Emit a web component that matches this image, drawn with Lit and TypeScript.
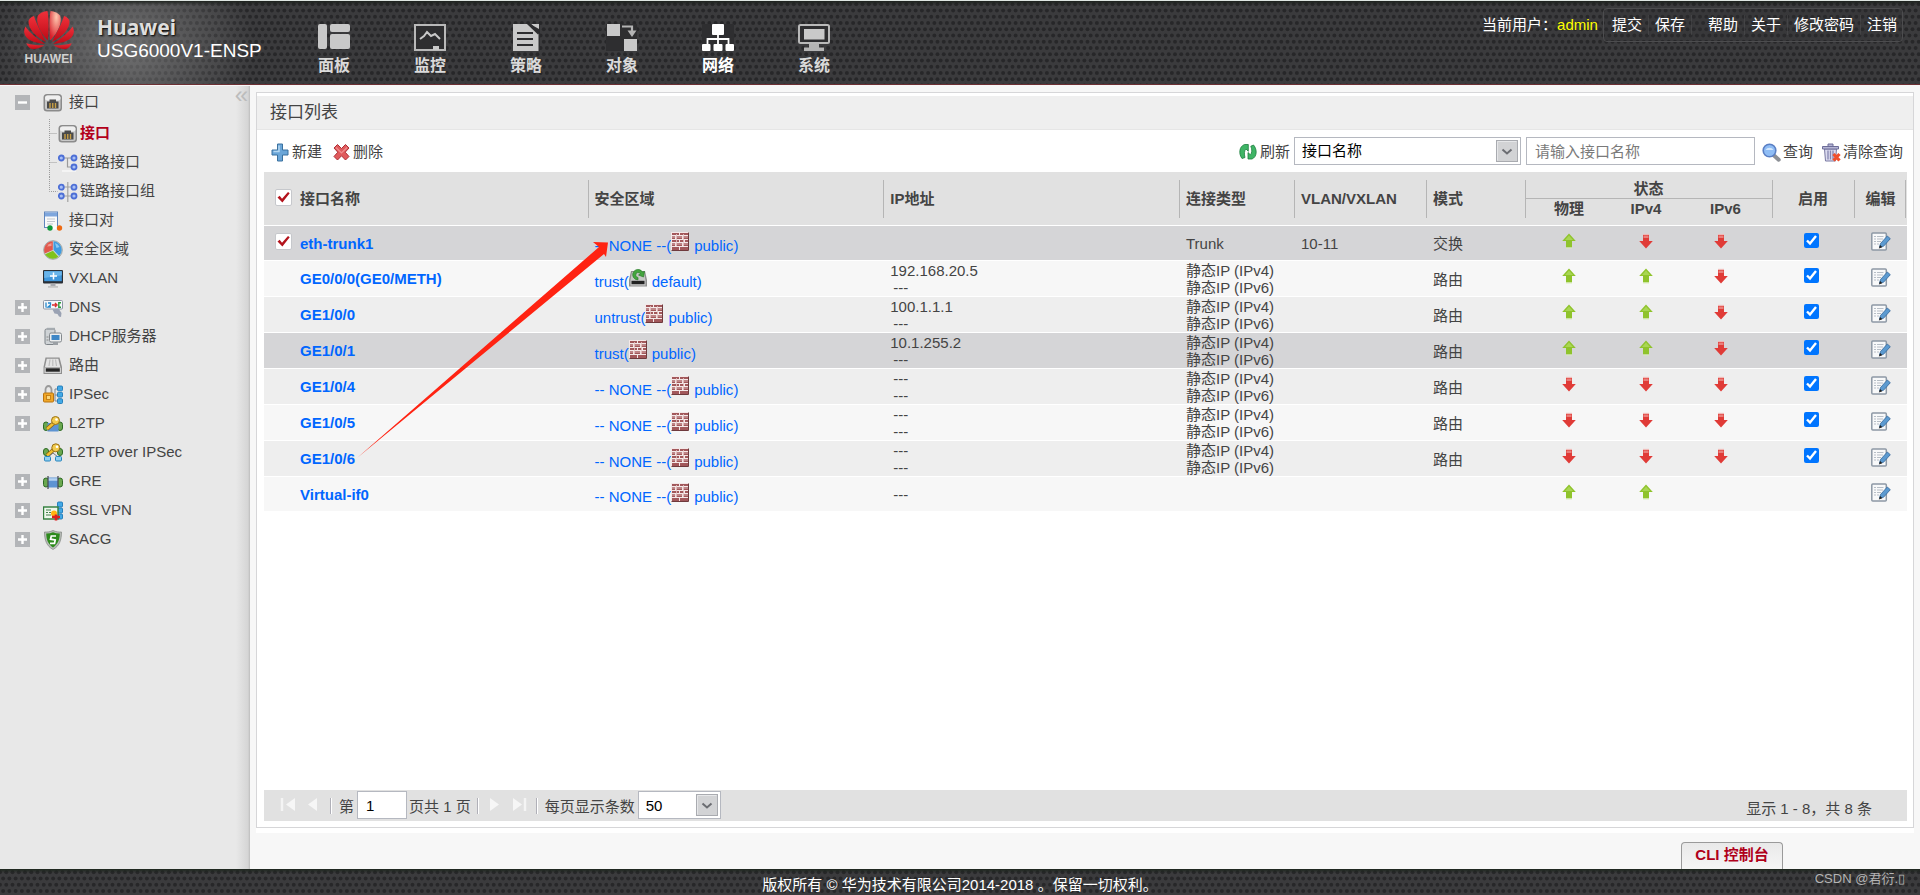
import { LitElement, html, css, svg, nothing, unsafeCSS } from "lit";
import { customElement, state } from "lit/decorators.js";
import { classMap } from "lit/directives/class-map.js";

const svgUrl = (markup: string) => unsafeCSS(`url("data:image/svg+xml,${encodeURIComponent(markup)}")`);

const meshDots: string[] = [];
for (let row = 0; row < 4; row++) {
  for (let col = 0; col < 5; col++) {
    const x = col * 5 + (row % 2 ? 2.5 : 0);
    meshDots.push(`<circle cx="${x}" cy="${row * 5 + 2.5}" r="1.6"/>`);
  }
}
const mesh = svgUrl(
  `<svg xmlns="http://www.w3.org/2000/svg" width="25" height="25" viewBox="0 0 20 20"><g fill="#272729">${meshDots.join("")}</g></svg>`
);
const comboArrow = svgUrl(
  `<svg xmlns="http://www.w3.org/2000/svg" width="22" height="22"><rect x=".5" y=".5" width="21" height="21" fill="#d2d3d5" stroke="#a9abb0"/><path d="M1.5 20.5V1.500H20.500" fill="none" stroke="#e6e7e9"/><path d="M6.500 9.500l4.500 4 4.500-4" fill="none" stroke="#6b6d72" stroke-width="2"/></svg>`
);
const redTick = svgUrl(
  `<svg xmlns="http://www.w3.org/2000/svg" width="17" height="17"><path d="M2.500 8.500l2.200-1.800 2.300 3L13 3l1.700 1.200L7.400 13.500z" fill="#b3131c"/></svg>`
);

const icons: Record<string, unknown> = {
  port: svg`<rect x=".5" y="1" width="18.500" height="17.500" rx="3.500" fill="#8b8b8b"/><rect x="2" y="2.500" width="15.500" height="14.500" rx="2.500" fill="#c9c9c9"/><rect x="2" y="2.500" width="15.500" height="5" rx="2.500" fill="#efefef"/><path d="M4 15.500V8.500h2.500V6.500h6.500v2h2.500v7z" fill="#4a4a4a"/><path d="M7 10v5M9.750 10v5M12.500 10v5" stroke="#c9a046" stroke-width="1.400"/>`,
  link: svg`<path d="M3 5h13M9.500 5v9h7" fill="none" stroke="#9a9a9a" stroke-width="1.200"/><path d="M4 18h14" stroke="#f8f8f8" stroke-width="1.500"/><g fill="#a9c0f5" stroke="#4d6fd6" stroke-width="1.800"><circle cx="3.300" cy="5" r="2.500"/><circle cx="16" cy="5" r="2.500"/><circle cx="16" cy="14" r="2.500"/></g>`,
  linkGroup: svg`<path d="M9.800 0v20M3 5h13M3 14h13" fill="none" stroke="#a2a2a2" stroke-width="1.200"/><g fill="#a9c0f5" stroke="#4d6fd6" stroke-width="1.800"><circle cx="3.300" cy="5.200" r="2.500"/><circle cx="16" cy="5.200" r="2.500"/><circle cx="3.300" cy="14" r="2.500"/><circle cx="16" cy="14" r="2.500"/></g>`,
  pair: svg`<rect x="1.500" y="1" width="13" height="15.500" fill="#fafafa" stroke="#5f86bd"/><rect x="2" y="1.500" width="12" height="4" fill="#7ea6dd"/><path d="M4 8h8M4 10.500h8M4 13h6" stroke="#c3c8cf"/><path d="M6 17h11" stroke="#fff" stroke-width="3"/><circle cx="7" cy="17" r="2.700" fill="#11993b"/><circle cx="16.500" cy="17" r="2.700" fill="#ee6a12"/>`,
  zone: svg`<circle cx="10" cy="10" r="9.300" fill="#d4d8d8" stroke="#8c9494" stroke-width=".8"/><path d="M9.800 10V1.200A8.800 8.800 0 0 0 1.800 13.400z" fill="#e2574c"/><path d="M10.500 9.900V1.200a8.800 8.800 0 0 1 5.600 14.900z" fill="#3f9be0"/><path d="M9.900 10.700l5.500 6A8.800 8.800 0 0 1 2.200 14.200z" fill="#7fc31c"/><path d="M4 6.500A7 7 0 0 1 8.500 3v3z" fill="#f19a90"/><path d="M12 3a7 7 0 0 1 4.500 4l-3 1z" fill="#8cc9f2"/>`,
  vxlan: svg`<rect x="0" y="1" width="20" height="13.500" rx="1" fill="#2b2f35"/><rect x="1.200" y="2.200" width="17.600" height="10" fill="#3f97dc"/><path d="M1.200 2.200h17.600v4L1.200 9z" fill="#69b4ea"/><path d="M10.500 3.500v7M7 7h7" stroke="#fff" stroke-width="1.500"/><path d="M7.500 14.500h5v2.500h-5z" fill="#a8abb0"/><path d="M5 17h10v1.800H5z" fill="#c4c4c4"/>`,
  dns: svg`<rect x=".5" y="2.500" width="19" height="8.500" rx="1" fill="#f5f7fa" stroke="#8c96a5"/><path d="M3 4.500v5M5 5h2.500v2L5 9h3" fill="none" stroke="#2588cc" stroke-width="1.300"/><path d="M9 7h4M12 5l2 2-2 2" fill="none" stroke="#d92b2b" stroke-width="1.400"/><path d="M18 4.800h-2.200v4.400H18" fill="none" stroke="#2a9a3a" stroke-width="1.400"/><path d="M9.500 11.500l6-1 3 4.500-.5 4-2-.5-1.500-2.500-3-.5z" fill="#9aa2b3"/>`,
  dhcp: svg`<rect x="2" y="2" width="10" height="15.500" rx="1.500" fill="#cfd3d6" stroke="#7d8388"/><path d="M4 .8h8v2H4z" fill="#a5abb0"/><rect x="6.500" y="6" width="12" height="9" rx="1.500" fill="#eceeef" stroke="#83888d"/><rect x="8.500" y="8" width="8" height="5" fill="#3f87c6"/><path d="M10 15h5v3h-5z" fill="#9ba0a5"/><path d="M3.500 10h2M3.500 13h2" stroke="#888"/>`,
  route: svg`<path d="M2.500 1.500h14L19 11v7H.5v-7z" fill="#8f8f8f"/><path d="M3.800 2.700h11.500l2 8.300H2z" fill="#e4e4e4"/><path d="M7 3.500L6 10M9.800 3.500V10M12.500 3.500l1 6.500" stroke="#bdbdbd" stroke-width="1.200"/><rect x="1.500" y="11.500" width="16.500" height="5.500" fill="#d0d0d0"/><rect x="2.800" y="12.300" width="14" height="3.400" fill="#262626"/>`,
  ipsec: svg`<path d="M2.500 8V4.500a3 3.500 0 0 1 6 0V8" fill="none" stroke="#9a9a9a" stroke-width="1.800"/><rect x=".5" y="8" width="10" height="9" rx="1" fill="#f0a627" stroke="#b87411"/><rect x="3.500" y="10.500" width="4" height="4" fill="#fbd67a" stroke="#b87411" stroke-width=".8"/><path d="M15 4h-3v12h3M12 10h3" fill="none" stroke="#7b8794"/><g fill="#43a9e6" stroke="#1c78b8" stroke-width=".9"><rect x="14.500" y="1" width="5" height="4.800" rx="1"/><rect x="14.500" y="7.300" width="5" height="4.800" rx="1"/><rect x="14.500" y="13.700" width="5" height="4.800" rx="1"/></g>`,
  l2tp: svg`<rect x=".5" y="8" width="5" height="8.500" rx="2.500" fill="#6aa84f" stroke="#2e6b25"/><rect x="14.500" y="8" width="5" height="8.500" rx="2.500" fill="#6aa84f" stroke="#2e6b25"/><rect x="4.500" y="9" width="11" height="8.500" fill="#5d93d2"/><path d="M4 15l8-7" stroke="#8a6210" stroke-width="4"/><path d="M4 15l8-7" stroke="#f0c02f" stroke-width="2.400"/><circle cx="12.500" cy="6.500" r="4" fill="#f2cb4d" stroke="#9b7114"/><circle cx="13.500" cy="5.500" r="1.300" fill="#fff"/>`,
  l2tpIpsec: svg`<rect x=".5" y="5.500" width="5" height="7" rx="2.500" fill="#6aa84f" stroke="#2e6b25"/><rect x="14.500" y="5.500" width="5" height="7" rx="2.500" fill="#6aa84f" stroke="#2e6b25"/><path d="M4 12.500l8-7" stroke="#8a6210" stroke-width="4"/><path d="M4 12.500l8-7" stroke="#f0c02f" stroke-width="2.400"/><circle cx="12.800" cy="4.800" r="4" fill="#f2cb4d" stroke="#9b7114"/><circle cx="14" cy="3.800" r="1.300" fill="#fff"/><path d="M5 14l5-4 5 4" fill="none" stroke="#777"/><g fill="#8fd0f2" stroke="#2584bd"><rect x="1.500" y="13.500" width="6" height="4.500" rx="1"/><rect x="12.500" y="13.500" width="6" height="4.500" rx="1"/></g>`,
  gre: svg`<rect x=".5" y="6" width="5" height="9" rx="2.500" fill="#6aa84f" stroke="#2e6b25"/><rect x="14.500" y="6" width="5" height="9" rx="2.500" fill="#6aa84f" stroke="#2e6b25"/><rect x="5" y="5.500" width="10" height="10" fill="#5d93d2"/><path d="M5 7.500h10" stroke="#b4d2f2" stroke-width="2.500"/><path d="M5 4v13M15 4v13" stroke="#4b4f57" stroke-width="1.300"/>`,
  sslvpn: svg`<g fill="#43a9e6" stroke="#1c78b8" stroke-width=".9"><rect x="14.500" y="1" width="5" height="5" rx="1"/><rect x="14.500" y="7" width="5" height="5" rx="1"/><rect x="14.500" y="13" width="5" height="5" rx="1"/></g><rect x=".5" y="6" width="14.500" height="12" fill="#eef7ec" stroke="#2f7d3b" stroke-width="1.400"/><path d="M3 9h5M3 11.500h2M6 11.500h2M3 14h5" stroke="#43804b" stroke-width="1.200"/><circle cx="11" cy="12.500" r="3" fill="#ffb30f"/><path d="M9 16h8M13 13.500v6" stroke="#dc1f1f" stroke-width="2.600"/>`,
  sacg: svg`<path d="M10 .5c3 1.300 5.500 1.800 8.500 1.500 0 8-2 14-8.500 17.500C3.500 16 1.500 10 1.500 2c3 .3 5.500-.2 8.500-1.500z" fill="#b9bdb9" stroke="#7c827c" stroke-width=".7"/><path d="M10 2.300c2.300 1 4.500 1.400 6.800 1.300-.2 6.400-2 10.900-6.800 13.900-4.800-3-6.600-7.500-6.800-13.900 2.300.1 4.500-.3 6.800-1.300z" fill="#2d8a1c"/><path d="M13 6H8.300L7.500 9.200l4.700.8-.7 3.300H7" fill="none" stroke="#fff" stroke-width="1.700"/>`,
  wall: svg`<rect width="18" height="19" fill="#f4e9e9"/><g fill="#a2585b"><path d="M1 1h7v2H1zM9 1h8v2H9zM1 4h3v3H1zM5 4h6v3H5zM12 4h5v3h-5zM1 8h7v2H1zM9 8h4v2H9zM14 8h3v2h-3zM1 11h3v3H1zM5 11h6v3H5zM12 11h5v3h-5zM1 15h7v3H1zM9 15h8v3H9z"/></g><path d="M1 5h16M1 12h16M5.500 2v12M12.500 2v12" stroke="#e8c9c9" stroke-width=".8"/><path d="M.5 18.500h17V.5" fill="none" stroke="#6f3a3d"/>`,
  system: svg`<path d="M2 3h14l2 9v6.500H0V12z" fill="#8e8e8e"/><path d="M3 4h12l1.500 8H1.500z" fill="#c4c8c4"/><rect x="1.500" y="12" width="15" height="5.500" fill="#c9c9c9"/><rect x="2.500" y="12.800" width="13" height="3.400" fill="#222"/><path d="M4.500 9.500A5 5 0 1 1 13.500 4l2-.5-1 5.500-5-2 2-1A2.500 2.500 0 1 0 9 9.500v2.300A5 5 0 0 1 4.500 9.500z" fill="#43a63e" stroke="#2a7d2a" stroke-width=".7"/>`,
  add: svg`<path d="M6.500 1h5v6H17v5h-5.500v6h-5v-6H1V7h5.500z" fill="#6ba6d8" stroke="#3a719f"/><path d="M8 2.500v6H2.500" fill="none" stroke="#b5d8f2" stroke-width="1.500"/>`,
  remove: svg`<path d="M1 5L4.500 1.500 8.500 5.500l4-4L16 5l-3.800 4.200L16 13.500 12.500 17l-4-4.200-4 4.200L1 13.500l3.800-4.300z" fill="#e05a5c" stroke="#ad2f35" stroke-linejoin="round"/><path d="M3 4.500L8.500 10 14 4.500" fill="none" stroke="#f08f8f" stroke-width="1.200"/>`,
  refresh: svg`<path d="M3 15.500C-.5 11 0 3.500 5.500 1.500h3.800v6.800L7 6C5.200 7.500 5 11 6 14.500z" fill="#3fb566" stroke="#1c7d3d" stroke-width=".8"/><path d="M14.500 2c4 4.500 3.500 12-1.500 14H9V9.500l2.300 2.200c1.800-1.500 2-5 .5-8.500z" fill="#3fb566" stroke="#1c7d3d" stroke-width=".8"/>`,
  search: svg`<path d="M11.500 12l5.200 4.700" stroke="#8d9096" stroke-width="4" stroke-linecap="round"/><circle cx="7.500" cy="7.500" r="6.300" fill="#8fbdf5" stroke="#5a7fc4" stroke-width="1.600"/><path d="M3.500 7a4.500 4 0 0 1 8 0z" fill="#d3e7fd"/>`,
  clear: svg`<path d="M2.500 6h12l-1 12h-10z" fill="#dcdcef" stroke="#7a7aa3"/><path d="M6 7.500v9M8.500 7.500v9M11 7.500v9" stroke="#8585b0" stroke-width="1.300"/><path d="M.5 3.500h16V6H.5zM6 3.500V1h5v2.500" fill="#b5b5d5" stroke="#6c6c98"/><path d="M11.500 11l6 6.500M17.500 11l-6 6.500" stroke="#f0502c" stroke-width="3.200"/>`,
  up: svg`<path d="M7 .5l6.800 7.500H10v6.500H4V8H.2z" fill="#8fc32c"/><path d="M7 2.500L3 7h8z" fill="#a9d653"/><path d="M4 14.500h6v1H4z" fill="#d9ecb8"/>`,
  down: svg`<path d="M4 1.500h6V8h3.800L7 15.500.2 8H4z" fill="#e03b37"/><path d="M4.500 2.500h5V5h-5z" fill="#ea7f7b"/><path d="M4 .8h6v1H4z" fill="#f3c6c4"/>`,
  edit: svg`<rect x=".8" y="1" width="14.500" height="17" rx="1" fill="#f8f9fa" stroke="#8d98a5" stroke-width="1.500"/><path d="M3 4.500h2M6 4.500h6.500M3 7h2M6 7h6M3 9.500h2M6 9.500h4M3 12h2M6 12h2" stroke="#b7bec6" stroke-width="1.200"/><path d="M8.500 15l1-3.500 6.800-7.500 3 2.700-6.800 7.600z" fill="#5c9ad0" stroke="#33679a" stroke-width=".8"/><path d="M7.800 16.500l1.300-3.500 2.300 2.300z" fill="#222"/>`,
  first: svg`<path d="M2 2v13" stroke="#f4f4f4" stroke-width="2.400"/><path d="M15 2v13L6 8.500z" fill="#f6f6f6"/>`,
  prev: svg`<path d="M12 2v13L3 8.500z" fill="#f6f6f6"/>`,
  next: svg`<path d="M4 2v13l9-6.500z" fill="#f6f6f6"/>`,
  last: svg`<path d="M2 2v13l9-6.500z" fill="#f6f6f6"/><path d="M14 2v13" stroke="#f4f4f4" stroke-width="2.400"/>`,
  navPanel: svg`<g fill="#c9c9c9"><rect x="0" y="0" width="9" height="25" rx="2"/><rect x="12" y="0" width="20" height="8" rx="2"/><rect x="12" y="10" width="20" height="15" rx="2"/></g>`,
  navMonitor: svg`<rect x="1" y="1" width="30" height="25" fill="#2e2e30" stroke="#b9b9b9" stroke-width="2"/><path d="M6 15l4-3 3-4 4 4 4-2 5 5" fill="none" stroke="#c9c9c9" stroke-width="2"/><path d="M19 22h6v4h-6z" fill="#c9c9c9"/>`,
  navPolicy: svg`<rect x="3" width="27" height="27" fill="#2e2e30"/><path d="M3 0h17l8.500 8.500V27H3z" fill="#c9c9c9"/><path d="M20 0h9v5z" fill="#c9c9c9"/><path d="M18 -1l11 10.500" stroke="#2e2e30" stroke-width="3"/><path d="M7 9h16M7 15h16M7 21h16" stroke="#2e2e30" stroke-width="2"/>`,
  navObject: svg`<rect width="31" height="27" fill="#2e2e30"/><path d="M1 0h13v12H1zM18 15h13v12H18z" fill="#c9c9c9"/><path d="M16 2.500h10V8" fill="none" stroke="#b4b4b4" stroke-width="2.200"/><path d="M21.500 6.500h9L26 13z" fill="#b4b4b4"/>`,
  navNetwork: svg`<rect width="32" height="27" fill="#2e2e30"/><g fill="#fff"><rect x="10" y="0" width="12" height="11" rx="1"/><rect x="0" y="20" width="8.500" height="7" rx="1"/><rect x="11.500" y="20" width="9" height="7" rx="1"/><rect x="23.500" y="20" width="8.500" height="7" rx="1"/></g><path d="M16 10v11M5.500 21v-6h21v6" fill="none" stroke="#fff" stroke-width="1.800"/>`,
  navSystem: svg`<rect x="1" y="1" width="30" height="18" rx="1.500" fill="#2e2e30" stroke="#b9b9b9" stroke-width="2"/><rect x="6" y="5" width="20.500" height="10.500" fill="#c9c9c9"/><path d="M11 20h10v3.500h5V27H6v-3.500h5z" fill="#b4b4b4"/>`,
};

const icon = (name: string, w = 20, h = 20) =>
  html`<svg class="icon" width=${w} height=${h} viewBox="0 0 ${w} ${h}" aria-hidden="true">${icons[name]}</svg>`;

interface MenuItem {
  label: string;
  icon: string;
  toggle?: "open" | "closed";
  children?: { label: string; icon: string; current?: boolean }[];
}

const menu: MenuItem[] = [
  {
    label: "接口",
    icon: "port",
    toggle: "open",
    children: [
      { label: "接口", icon: "port", current: true },
      { label: "链路接口", icon: "link" },
      { label: "链路接口组", icon: "linkGroup" },
    ],
  },
  { label: "接口对", icon: "pair" },
  { label: "安全区域", icon: "zone" },
  { label: "VXLAN", icon: "vxlan" },
  { label: "DNS", icon: "dns", toggle: "closed" },
  { label: "DHCP服务器", icon: "dhcp", toggle: "closed" },
  { label: "路由", icon: "route", toggle: "closed" },
  { label: "IPSec", icon: "ipsec", toggle: "closed" },
  { label: "L2TP", icon: "l2tp", toggle: "closed" },
  { label: "L2TP over IPSec", icon: "l2tpIpsec" },
  { label: "GRE", icon: "gre", toggle: "closed" },
  { label: "SSL VPN", icon: "sslvpn", toggle: "closed" },
  { label: "SACG", icon: "sacg", toggle: "closed" },
];

const sections = [
  { label: "面板", icon: "navPanel" },
  { label: "监控", icon: "navMonitor" },
  { label: "策略", icon: "navPolicy" },
  { label: "对象", icon: "navObject" },
  { label: "网络", icon: "navNetwork", current: true },
  { label: "系统", icon: "navSystem" },
];

type Link = "up" | "down" | null;
interface Row {
  name: string;
  zone: string;
  vsys: string;
  ip: string[];
  type: string[];
  vlan?: string;
  mode?: string;
  status: [Link, Link, Link];
  enabled?: boolean;
  checked?: boolean;
  marked?: boolean;
}

const dual = ["静态IP (IPv4)", "静态IP (IPv6)"];
const none = "---";
const rows: Row[] = [
  { name: "eth-trunk1", zone: "-- NONE --", vsys: "public", ip: [], type: ["Trunk"], vlan: "10-11", mode: "交换", status: ["up", "down", "down"], enabled: true, checked: true, marked: true },
  { name: "GE0/0/0(GE0/METH)", zone: "trust", vsys: "default", ip: ["192.168.20.5", none], type: dual, mode: "路由", status: ["up", "up", "down"], enabled: true },
  { name: "GE1/0/0", zone: "untrust", vsys: "public", ip: ["100.1.1.1", none], type: dual, mode: "路由", status: ["up", "up", "down"], enabled: true },
  { name: "GE1/0/1", zone: "trust", vsys: "public", ip: ["10.1.255.2", none], type: dual, mode: "路由", status: ["up", "up", "down"], enabled: true, marked: true },
  { name: "GE1/0/4", zone: "-- NONE --", vsys: "public", ip: [none, none], type: dual, mode: "路由", status: ["down", "down", "down"], enabled: true },
  { name: "GE1/0/5", zone: "-- NONE --", vsys: "public", ip: [none, none], type: dual, mode: "路由", status: ["down", "down", "down"], enabled: true },
  { name: "GE1/0/6", zone: "-- NONE --", vsys: "public", ip: [none, none], type: dual, mode: "路由", status: ["down", "down", "down"], enabled: true },
  { name: "Virtual-if0", zone: "-- NONE --", vsys: "public", ip: [none], type: [], status: ["up", "up", null] },
];

const base = css`
  * {
    box-sizing: border-box;
  }
  a {
    color: inherit;
    text-decoration: none;
  }
  button {
    font: inherit;
    color: inherit;
    background: none;
    border: 0;
    padding: 0;
    cursor: pointer;
  }
  ul {
    list-style: none;
    margin: 0;
    padding: 0;
  }
  .icon {
    flex: none;
  }
`;

@customElement("app-header")
class AppHeader extends LitElement {
  static styles = [
    base,
    css`
      :host {
        display: flex;
        align-items: flex-start;
        height: 85px;
        color: #fff;
        border-top: 1px solid #dfe6e2;
        border-bottom: 1px solid #6d3034;
        background: linear-gradient(rgba(25, 30, 25, 0.9), rgba(25, 30, 25, 0) 4px),
          radial-gradient(130px 100px at 125px 44px, rgba(150, 150, 150, 0.6), rgba(150, 150, 150, 0)), ${mesh}, #3b3b3d;
      }
      .logo {
        display: flex;
        flex-direction: column;
        align-items: center;
        width: 97px;
        padding-top: 10px;
        color: #d0d0d0;
        font-size: 12px;
        line-height: 14px;
        font-weight: bold;
      }
      .logo svg {
        margin-bottom: 2px;
      }
      .product {
        width: 189px;
        padding-top: 14px;
        white-space: nowrap;
      }
      .brand {
        font: bold 21px/24px "Noto Sans", sans-serif;
        color: #dedede;
        text-shadow: 1px 1px 2px #000;
      }
      .model {
        font-size: 19px;
        line-height: 24px;
      }
      nav {
        display: flex;
      }
      .section {
        display: flex;
        flex-direction: column;
        align-items: center;
        width: 96px;
        padding-top: 23px;
        font-size: 16px;
        line-height: 20px;
        font-weight: bold;
        color: #dadada;
        gap: 5px;
      }
      .section.current {
        color: #fff;
      }
      .user {
        display: flex;
        align-items: center;
        margin: 7px 17px 0 auto;
        font-size: 15px;
        line-height: 20px;
        white-space: nowrap;
      }
      .account {
        color: #ff0;
        margin-right: 5px;
      }
      .links {
        display: flex;
        height: 34px;
        align-items: center;
        border: 1px solid #4c4c4e;
        border-radius: 4px;
        padding: 0 5px 0 2px;
        background: rgba(48, 48, 50, 0.25);
      }
      .links a {
        padding: 0 6px;
        border-right: 1px solid rgba(80, 80, 82, 0.5);
      }
      .links a:last-child {
        border-right: 0;
        padding-right: 0;
      }
      .links .gap {
        margin-left: 10px;
      }
    `,
  ];

  render() {
    return html`
      <div class="logo">
        <svg width="50" height="39" viewBox="0 0 50 39" role="img" aria-label="HUAWEI">
          <defs>
            <linearGradient id="petal" x1="0" y1="0" x2="0" y2="1">
              <stop offset="0" stop-color="#f0303a" />
              <stop offset="1" stop-color="#bd0a16" />
            </linearGradient>
            <radialGradient id="shine" cx=".6" cy=".2" r=".8">
              <stop offset="0" stop-color="#ffc9b0" />
              <stop offset="1" stop-color="#d81e2a" />
            </radialGradient>
            <g id="petals" fill="url(#petal)">
              <path d="M22 31C12 26 4 18 4.500 10c.8-2.500 2.500-4 5.500-5C12.500 14 18 22 22 31z" />
              <path d="M21 33C11 32 1 29 .2 21.500c-.3-2 .2-4 1.200-6C6 22.500 14 28 21 33z" />
              <path d="M20.500 34.300C15 38 8 39.500 5.500 36.800 4 35.500 3 34 2.300 32.300c6 1.700 12 2.200 18.200 2z" />
            </g>
          </defs>
          <path d="M23.800 29.500C15.500 21 11.500 11 13.800 4.800 15.500 2 19.500.3 23.500 0 25 8 24.800 20 23.800 29.500z" fill="url(#petal)" />
          <path d="M26.200 29.500C34.500 21 38.500 11 36.200 4.800 34.500 2 30.500.3 26.500 0 25 8 25.200 20 26.200 29.500z" fill="url(#shine)" />
          <use href="#petals" />
          <use href="#petals" transform="matrix(-1 0 0 1 50 0)" />
        </svg>
        <span>HUAWEI</span>
      </div>
      <div class="product">
        <div class="brand">Huawei</div>
        <div class="model">USG6000V1-ENSP</div>
      </div>
      <nav>
        ${sections.map(
          (s) => html`<a href="#" class=${classMap({ section: true, current: !!s.current })}>${icon(s.icon, 32, 27)}<span>${s.label}</span></a>`
        )}
      </nav>
      <div class="user">
        <span>当前用户：</span><span class="account">admin</span>
        <div class="links">
          <a href="#">提交</a><a href="#">保存</a><a class="gap" href="#">帮助</a><a href="#">关于</a><a href="#">修改密码</a><a href="#">注销</a>
        </div>
      </div>
    `;
  }
}

@customElement("side-menu")
class SideMenu extends LitElement {
  static styles = [
    base,
    css`
      :host {
        display: flex;
        justify-content: space-between;
        width: 250px;
        flex: none;
        padding-top: 2px;
        color: #444;
        font-size: 15px;
        background: linear-gradient(90deg, rgba(190, 190, 190, 0), rgba(190, 190, 190, 0.45) 12px, #bdbdbd 14px) right / 14px 100% no-repeat, #e8e8e8;
      }
      .item {
        display: flex;
        align-items: center;
        height: 29px;
        padding-left: 15px;
      }
      .toggle {
        display: flex;
        width: 15px;
        height: 15px;
        background: #b3b5b8;
      }
      .slot {
        width: 15px;
      }
      .entry {
        display: flex;
        align-items: center;
        gap: 6px;
        margin-left: 13px;
      }
      .entry span,
      .child span {
        line-height: 20px;
        margin-bottom: 2px;
      }
      .sub {
        padding: 2px 0 0 49px;
      }
      .child {
        display: flex;
        align-items: center;
        height: 29px;
      }
      .child a {
        display: flex;
        align-items: center;
        gap: 2px;
      }
      .current {
        color: #b3001b;
        font-weight: bold;
      }
      .collapse {
        align-self: flex-start;
        color: #bcbcbc;
        font-size: 24px;
        line-height: 14px;
        margin-right: 2px;
      }
    `,
  ];

  render() {
    return html`
      <ul>
        ${menu.map(
          (m) => html`<li>
            <div class="item">
              ${m.toggle
                ? html`<button class="toggle" aria-label=${m.label} aria-expanded=${m.toggle === "open"}>
                    <svg width="15" height="15" viewBox="0 0 15 15">
                      <path d=${m.toggle === "open" ? "M3 7.5h9" : "M3 7.5h9M7.500 3v9"} stroke="#fff" stroke-width="2.400" />
                    </svg>
                  </button>`
                : html`<span class="slot"></span>`}
              <a class="entry" href="#">${icon(m.icon)}<span>${m.label}</span></a>
            </div>
            ${m.children
              ? html`<ul class="sub">
                  ${m.children.map(
                    (c, i) => html`<li class="child">
                      <svg class="icon" width="9" height="29" viewBox="0 0 9 29">
                        <path d=${i === m.children!.length - 1 ? "M.5 0v14.500h8" : "M.5 0v29M.5 14.500h8"} fill="none" stroke="#9d9d9d" stroke-dasharray="1 1" />
                      </svg>
                      <a href="#" class=${classMap({ current: !!c.current })}>${icon(c.icon)}<span>${c.label}</span></a>
                    </li>`
                  )}
                </ul>`
              : nothing}
          </li>`
        )}
      </ul>
      <button class="collapse" aria-label="收起">«</button>
    `;
  }
}

@customElement("interface-table")
class InterfaceTable extends LitElement {
  static styles = [
    base,
    css`
      :host {
        display: block;
        position: relative;
      }
      table {
        width: 100%;
        table-layout: fixed;
        border-collapse: separate;
        border-spacing: 0;
        font-size: 15px;
        line-height: 17px;
        color: #444;
      }
      .c-check { width: 36px; }
      .c-wide { width: 18%; }
      .c-type { width: 115px; }
      .c-vlan { width: 132px; }
      .c-mode { width: 99px; }
      .c-phy { width: 88px; }
      .c-v4 { width: 66px; }
      .c-v6 { width: 93px; }
      .c-on { width: 82px; }
      .c-edit { width: 53px; }
      th {
        height: 27px;
        padding: 0 0 0 7px;
        text-align: left;
        background-color: #e1e1e1;
        background-repeat: no-repeat;
      }
      .rule {
        background-image: linear-gradient(#b5b5b5, #b5b5b5);
        background-size: 1px 38px;
        background-position: left center;
      }
      .rule-top {
        background-image: linear-gradient(#b5b5b5, #b5b5b5), linear-gradient(#b5b5b5, #b5b5b5);
        background-size: 1px 19px, 100% 1px;
        background-position: left bottom, left bottom;
      }
      .rule-bottom {
        background-image: linear-gradient(#b5b5b5, #b5b5b5);
        background-size: 1px 19px;
        background-position: left top;
      }
      .rule-both {
        background-image: linear-gradient(#b5b5b5, #b5b5b5), linear-gradient(#b5b5b5, #b5b5b5);
        background-size: 1px 38px, 1px 38px;
        background-position: left center, 51px center;
      }
      th.mid,
      td.mid {
        text-align: center;
        padding-left: 0;
      }
      .low {
        vertical-align: bottom;
        padding-bottom: 2px;
      }
      .high {
        vertical-align: top;
        padding: 1px 0 8px;
      }
      td {
        height: 35px;
        padding: 1px 0 0 7px;
        border-bottom: 1px solid #fff;
      }
      thead tr:last-child th,
      th[rowspan] {
        border-bottom: 1px solid #fff;
      }
      tbody tr:nth-child(odd) { background: #eee; }
      tbody tr:nth-child(even) { background: #f7f7f7; }
      tbody tr.marked { background: #d5d5d7; }
      td.check,
      th.check {
        padding: 0 0 3px 11px;
      }
      td.name,
      th.name {
        padding-left: 0;
      }
      td.name,
      td.zone {
        color: #06f;
      }
      td.name {
        padding-top: 0;
        font-weight: bold;
      }
      td.zone {
        padding-top: 0;
        white-space: nowrap;
      }
      td.zone .icon {
        margin-right: 5px;
      }
      td.raised {
        padding: 0 0 2px;
      }
      td.raised > * {
        display: block;
        margin: 0 auto;
      }
      td.v6 {
        padding-right: 8px;
      }
      td.enabled {
        padding-right: 3px;
      }
      .dash {
        padding-left: 3px;
      }
      .tick {
        appearance: none;
        display: block;
        width: 17px;
        height: 17px;
        margin: 0;
        background: #fff;
        border: 1px solid #c6c8cc;
        border-radius: 2px;
      }
      .tick:checked {
        background-image: ${redTick};
        background-position: center;
      }
      td.raised .enable {
        width: 15px;
        height: 15px;
        margin-bottom: 4px;
        accent-color: #0075ff;
      }
      td.raised button {
        width: 20px;
        height: 20px;
      }
      .pointer {
        position: absolute;
        left: 92px;
        top: 68px;
        pointer-events: none;
      }
    `,
  ];

  render() {
    const mark = (s: Link, label: string, extra = "") =>
      html`<td class="mid raised ${extra}">${s ? html`<span title="${label} ${s}">${icon(s, 14, 16)}</span>` : nothing}</td>`;
    return html`
      <table>
        <colgroup>
          <col class="c-check" /><col /><col class="c-wide" /><col class="c-wide" /><col class="c-type" /><col class="c-vlan" />
          <col class="c-mode" /><col class="c-phy" /><col class="c-v4" /><col class="c-v6" /><col class="c-on" /><col class="c-edit" />
        </colgroup>
        <thead>
          <tr>
            <th rowspan="2" class="check"><input type="checkbox" class="tick" aria-label="全选" checked /></th>
            <th rowspan="2" class="name">接口名称</th>
            <th rowspan="2" class="rule">安全区域</th>
            <th rowspan="2" class="rule">IP地址</th>
            <th rowspan="2" class="rule">连接类型</th>
            <th rowspan="2" class="rule">VLAN/VXLAN</th>
            <th rowspan="2" class="rule">模式</th>
            <th colspan="3" class="mid low rule-top">状态</th>
            <th rowspan="2" class="mid rule">启用</th>
            <th rowspan="2" class="mid rule-both">编辑</th>
          </tr>
          <tr>
            <th class="mid high rule-bottom">物理</th>
            <th class="mid high">IPv4</th>
            <th class="mid high">IPv6</th>
          </tr>
        </thead>
        <tbody>
          ${rows.map(
            (r) => html`<tr class=${classMap({ marked: !!r.marked })}>
              <td class="check">${r.checked ? html`<input type="checkbox" class="tick" aria-label=${r.name} checked />` : nothing}</td>
              <td class="name"><a href="#">${r.name}</a></td>
              <td class="zone"><a href="#">${r.zone}(${icon(r.vsys === "default" ? "system" : "wall", 18, 19)}${r.vsys})</a></td>
              <td>${r.ip.map((v) => html`<div class=${classMap({ dash: v === none })}>${v}</div>`)}</td>
              <td>${r.type.map((t) => html`<div>${t}</div>`)}</td>
              <td>${r.vlan}</td>
              <td>${r.mode}</td>
              ${mark(r.status[0], "物理")}${mark(r.status[1], "IPv4")}${mark(r.status[2], "IPv6", "v6")}
              <td class="mid raised enabled">
                ${r.enabled ? html`<input type="checkbox" class="enable" aria-label="启用 ${r.name}" checked />` : nothing}
              </td>
              <td class="mid raised"><button aria-label="编辑 ${r.name}">${icon("edit")}</button></td>
            </tr>`
          )}
        </tbody>
      </table>
      <svg class="pointer" width="256" height="220" viewBox="0 0 256 220" aria-hidden="true">
        <path d="M1 218L243 7l-6-5 15 .5L250 17l-2-3z" fill="#ff2312" />
      </svg>
    `;
  }
}

@customElement("app-root")
class AppRoot extends LitElement {
  @state() private page = "1";

  static styles = [
    base,
    css`
      :host {
        display: flex;
        flex-direction: column;
        min-height: 100vh;
        font-family: "Liberation Sans", "Noto Sans CJK SC", sans-serif;
        font-size: 15px;
        color: #444;
        background: #f7f7f7;
      }
      .body {
        display: flex;
        flex: 1;
        border-top: 1px solid #f7f7f7;
      }
      main {
        flex: 1;
        min-width: 0;
        display: flex;
        flex-direction: column;
        padding: 6px 6px 0 6px;
      }
      .panel {
        flex: 1;
        display: flex;
        flex-direction: column;
        background: #fff;
        border: 1px solid #d6d6d8;
        padding-bottom: 6px;
        box-shadow: 0 5px 0 #fff;
      }
      h1 {
        margin: 3px 0 0;
        padding-left: 13px;
        height: 34px;
        font-size: 17px;
        line-height: 34px;
        font-weight: normal;
        background: #efefef;
        border-bottom: 1px solid #e6e6e6;
      }
      .tools {
        display: flex;
        align-items: center;
        height: 42px;
        padding: 2px 10px 0 14px;
        line-height: 20px;
      }
      .tool {
        display: flex;
        align-items: center;
        gap: 3px;
        margin-right: 11px;
      }
      .grow {
        margin-left: auto;
        margin-right: 4px;
      }
      .query {
        gap: 2px;
        margin-right: 9px;
      }
      .clear {
        gap: 2px;
        margin-right: 0;
      }
      select,
      input {
        font: inherit;
        color: #000;
        height: 28px;
        border: 1px solid #b5b8c0;
        border-radius: 0;
        background: #fff;
        padding: 0 8px;
        margin: 0;
      }
      select {
        appearance: none;
        padding-left: 7px;
        background: ${comboArrow} right 2px center no-repeat #fff;
      }
      input::placeholder {
        color: #7a7a7a;
        opacity: 1;
      }
      .field {
        width: 227px;
        margin-bottom: 2px;
      }
      .keyword {
        width: 229px;
        margin: 0 7px 2px 5px;
      }
      interface-table,
      .pager {
        margin: 0 6px 0 7px;
      }
      .pager {
        display: flex;
        align-items: center;
        height: 31px;
        margin-top: auto;
        padding: 0 35px 0 16px;
        background: #e1e1e1;
        white-space: nowrap;
      }
      .pager button {
        display: flex;
        margin-right: 8px;
        margin-bottom: 3px;
      }
      .bar {
        width: 2px;
        height: 16px;
        background: #b0b0b8;
        border-right: 1px solid #fff;
        margin-right: 7px;
      }
      .pager label {
        display: flex;
        align-items: center;
        gap: 3px;
      }
      .num {
        width: 50px;
      }
      .total {
        margin: 0 6px 0 2px;
      }
      .size {
        width: 83px;
      }
      .num,
      .size {
        margin-bottom: 1px;
      }
      .count {
        margin-left: auto;
        padding-top: 3px;
      }
      .dock {
        display: flex;
        justify-content: flex-end;
        height: 41px;
        align-items: flex-end;
        padding-right: 131px;
      }
      .cli {
        width: 102px;
        height: 27px;
        padding-bottom: 5px;
        border: 1px solid #9a9a9a;
        border-bottom: 0;
        border-radius: 4px 4px 0 0;
        background: linear-gradient(#e9e9e9, #f5f5f5);
        color: #b0001a;
        font-weight: bold;
      }
      footer {
        display: grid;
        grid-template-columns: 1fr auto 1fr;
        align-items: center;
        height: 26px;
        color: #fff;
        line-height: 20px;
        background: linear-gradient(rgba(25, 35, 25, 0.9), rgba(25, 30, 25, 0) 4px), ${mesh}, #3b3b3d;
      }
      .rights {
        grid-column: 2;
        padding-top: 5px;
      }
      .mark {
        justify-self: end;
        font-size: 13px;
        color: #b4b4b4;
        margin: 0 15px 6px 0;
      }
    `,
  ];

  render() {
    return html`
      <app-header></app-header>
      <div class="body">
        <side-menu></side-menu>
        <main>
          <section class="panel">
            <h1>接口列表</h1>
            <div class="tools">
              <button class="tool">${icon("add", 18, 19)}新建</button>
              <button class="tool">${icon("remove", 17, 19)}删除</button>
              <button class="tool grow">${icon("refresh", 18, 18)}刷新</button>
              <select class="field" aria-label="查询条件"><option>接口名称</option></select>
              <input class="keyword" type="text" placeholder="请输入接口名称" aria-label="请输入接口名称" />
              <button class="tool query">${icon("search", 19, 19)}查询</button>
              <button class="tool clear">${icon("clear", 19, 19)}清除查询</button>
            </div>
            <interface-table></interface-table>
            <div class="pager">
              <button aria-label="首页">${icon("first", 17, 17)}</button>
              <button aria-label="上一页">${icon("prev", 17, 17)}</button>
              <span class="bar"></span>
              <label>第<input class="num" type="text" .value=${this.page} /></label>
              <span class="total">页共 1 页</span>
              <span class="bar"></span>
              <button aria-label="下一页">${icon("next", 17, 17)}</button>
              <button aria-label="末页">${icon("last", 17, 17)}</button>
              <span class="bar"></span>
              <label>每页显示条数<select class="size"><option>50</option></select></label>
              <span class="count">显示 1 - 8，共 8 条</span>
            </div>
          </section>
          <div class="dock"><button class="cli">CLI 控制台</button></div>
        </main>
      </div>
      <footer>
        <span class="rights">版权所有 © 华为技术有限公司2014-2018 。保留一切权利。</span>
        <span class="mark">CSDN @君衍.▯</span>
      </footer>
    `;
  }
}
